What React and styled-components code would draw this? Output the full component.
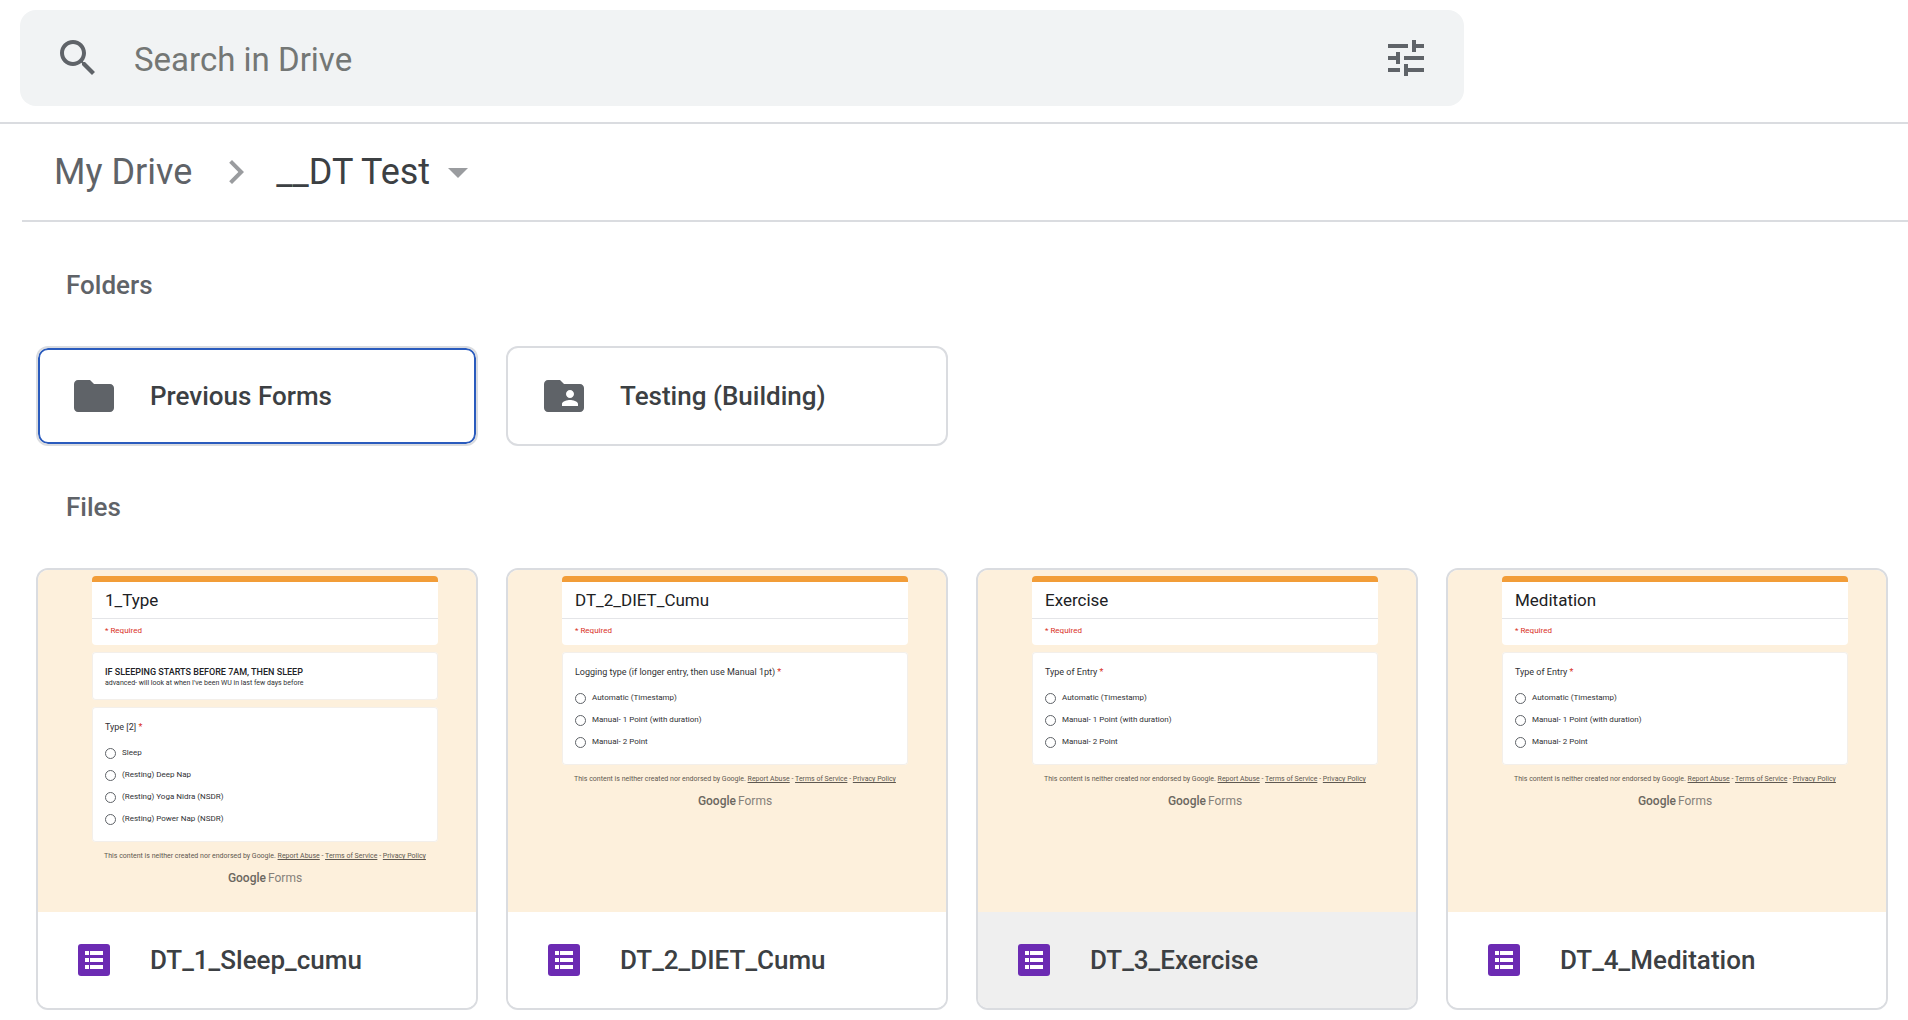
import React from "react";
import styled, { createGlobalStyle, css } from "styled-components";

const GlobalStyle = createGlobalStyle`
  *, *::before, *::after { box-sizing: border-box; }
  body {
    margin: 0;
    background: #fff;
    color: #3c4043;
    font-family: Roboto, "Liberation Sans", sans-serif;
  }
  button, input { font: inherit; color: inherit; }
`;

const Header = styled.header`
  display: flex;
  padding: 10px 20px 16px;
  border-bottom: 2px solid #dadce0;
`;

const SearchBar = styled.form`
  flex: 1;
  max-width: 1444px;
  height: 96px;
  display: flex;
  align-items: center;
  padding: 0 34px;
  border-radius: 16px;
  background: #f1f3f4;
  color: #5f6368;
`;

const SearchInput = styled.input`
  flex: 1;
  min-width: 0;
  height: 64px;
  padding: 2px 32px 0;
  border: 0;
  outline: 0;
  background: transparent;
  font-size: 33px;
  &::placeholder { color: #747775; opacity: 1; }
`;

const plainButton = css`
  padding: 0;
  border: 0;
  background: transparent;
  cursor: pointer;
`;

const IconButton = styled.button`
  ${plainButton}
  display: flex;
`;

const Icon = styled.svg`
  display: block;
  flex: none;
  width: 48px;
  height: 48px;
  fill: ${(p) => p.$color || "currentColor"};
`;

const Breadcrumbs = styled.nav`
  display: flex;
  align-items: center;
  height: 98px;
  margin-left: 22px;
  padding-left: 32px;
  border-bottom: 2px solid #dadce0;
  font-size: 36px;
  line-height: 48px;
`;

const Crumb = styled.a`
  margin-right: 20px;
  color: #5f6368;
  text-decoration: none;
`;

const CurrentCrumb = styled.button`
  ${plainButton}
  display: flex;
  align-items: center;
  gap: 4px;
  margin-left: 16px;
  color: #3c4043;
`;

const Main = styled.main`
  padding: 0 20px 10px 36px;
`;

const SectionTitle = styled.h2`
  margin: 0;
  padding: ${(p) => p.$top}px 30px 45px;
  color: #5f6368;
  font-size: 26px;
  font-weight: 500;
  line-height: 32px;
`;

const CardGrid = styled.div`
  display: grid;
  grid-template-columns: repeat(4, minmax(0, 1fr));
  gap: 28px;
`;

const cardFrame = css`
  border: 2px solid #dadce0;
  border-radius: 12px;
  background: #fff;
`;

const cardLabel = css`
  display: flex;
  align-items: center;
  gap: 32px;
  width: 100%;
  height: 96px;
  padding: 0 32px;
  color: #3c4043;
  font-size: 26px;
  font-weight: 500;
  text-align: left;
  text-decoration: none;
  white-space: nowrap;
  cursor: pointer;
`;

const FolderCard = styled.button`
  ${cardLabel}
  ${cardFrame}
  height: 100px;
  ${(p) => p.$selected && css`box-shadow: inset 0 0 0 2px #2a5bbd;`}
`;

const FileCard = styled.article`
  ${cardFrame}
  overflow: hidden;
`;

const FileLabel = styled.a`
  ${cardLabel}
  background: ${(p) => (p.$hovered ? "#efefef" : "#fff")};
`;

const Preview = styled.div`
  display: flex;
  flex-direction: column;
  gap: 7px;
  height: 342px;
  padding: 6px 38px 0 54px;
  background: #fdf0dc;
  color: #303134;
  white-space: nowrap;
`;

const FormHead = styled.div`
  height: 69px;
  border-top: 6px solid #f29d38;
  border-radius: 4px;
  background: #fff;
  font-size: 8px;
  line-height: 24px;
`;

const FormTitle = styled.h3`
  margin: 0;
  padding: 0 13px;
  border-bottom: 1px solid #e4e5e8;
  color: #202124;
  font-size: 17px;
  font-weight: 400;
  line-height: 36px;
`;

const Required = styled.p`
  margin: 0;
  padding: 0 13px;
  color: #d93025;
`;

const FormSection = styled.fieldset`
  min-width: 0;
  margin: 0;
  padding: 14px 13px 17px;
  border: 0;
  border-radius: 4px;
  background: #fff;
  box-shadow: inset 0 0 0 1px #f3efea;
  font-size: 8px;
  line-height: 12px;
`;

const Question = styled.div`
  margin-bottom: 14px;
  font-size: 9px;
`;

const Star = styled.span`
  color: #d93025;
`;

const Options = styled.div`
  display: flex;
  flex-direction: column;
  align-items: flex-start;
  gap: 10px;
`;

const Option = styled.label`
  display: flex;
  align-items: center;
  gap: 6px;
  height: 12px;
`;

const Radio = styled.input`
  appearance: none;
  width: 11px;
  height: 11px;
  margin: 0;
  border: 1px solid #5f6368;
  border-radius: 50%;
`;

const Notice = styled.div`
  height: 48px;
  padding: 14px 13px 0;
  border-radius: 4px;
  background: #fff;
  box-shadow: inset 0 0 0 1px #f3efea;
  font-size: 7px;
  line-height: 11px;
`;

const NoticeTitle = styled.div`
  color: #202124;
  font-size: 9px;
  font-weight: 500;
  line-height: 12px;
`;

const Disclaimer = styled.p`
  margin: 0;
  color: #5e5850;
  font-size: 7px;
  line-height: 14px;
  text-align: center;
`;

const DisclaimerLink = styled.a`
  color: inherit;
`;

const Brand = styled.div`
  color: #85807a;
  font-size: 12px;
  line-height: 16px;
  text-align: center;
`;

const BrandName = styled.span`
  margin-right: 2px;
  color: #6b675f;
  font-weight: 500;
`;

const folders = [
  { name: "Previous Forms", selected: true },
  { name: "Testing (Building)", shared: true },
];

const entryOptions = [
  "Automatic (Timestamp)",
  "Manual- 1 Point (with duration)",
  "Manual- 2 Point",
];

const files = [
  {
    name: "DT_1_Sleep_cumu",
    title: "1_Type",
    notice: {
      title: "IF SLEEPING STARTS BEFORE 7AM, THEN SLEEP",
      text: "advanced- will look at when I've been WU in last few days before",
    },
    question: "Type [2]",
    options: [
      "Sleep",
      "(Resting) Deep Nap",
      "(Resting) Yoga Nidra (NSDR)",
      "(Resting) Power Nap (NSDR)",
    ],
  },
  {
    name: "DT_2_DIET_Cumu",
    title: "DT_2_DIET_Cumu",
    question: "Logging type (if longer entry, then use Manual 1pt)",
    options: entryOptions,
  },
  {
    name: "DT_3_Exercise",
    title: "Exercise",
    question: "Type of Entry",
    options: entryOptions,
    hovered: true,
  },
  {
    name: "DT_4_Meditation",
    title: "Meditation",
    question: "Type of Entry",
    options: entryOptions,
  },
];

const FOLDER =
  "M10 4H4c-1.1 0-1.99.9-1.99 2L2 18c0 1.1.9 2 2 2h16c1.1 0 2-.9 2-2V8c0-1.1-.9-2-2-2h-8l-2-2z";
const FOLDER_SHARED =
  "M20 6h-8l-2-2H4c-1.1 0-1.99.9-1.99 2L2 18c0 1.1.9 2 2 2h16c1.1 0 2-.9 2-2V8c0-1.1-.9-2-2-2zm-5 3c1.1 0 2 .9 2 2s-.9 2-2 2-2-.9-2-2 .9-2 2-2zm4 8h-8v-1c0-1.33 2.67-2 4-2s4 .67 4 2v1z";

function Glyph({ d, color }) {
  return (
    <Icon viewBox="0 0 24 24" $color={color} aria-hidden="true">
      <path d={d} />
    </Icon>
  );
}

function FormsIcon() {
  return (
    <Icon viewBox="0 0 48 48" $color="#fff" aria-hidden="true">
      <rect x="8" y="8" width="32" height="32" rx="3" fill="#6c2bb3" />
      {[15, 22, 29].map((y) => (
        <path key={y} d={`M15 ${y}h4v4h-4zM20 ${y}h13v4H20z`} />
      ))}
    </Icon>
  );
}

function FormPreview({ file }) {
  return (
    <Preview>
      <FormHead>
        <FormTitle>{file.title}</FormTitle>
        <Required>* Required</Required>
      </FormHead>
      {file.notice && (
        <Notice>
          <NoticeTitle>{file.notice.title}</NoticeTitle>
          {file.notice.text}
        </Notice>
      )}
      <FormSection aria-label={file.question}>
        <Question>
          {file.question} <Star>*</Star>
        </Question>
        <Options>
          {file.options.map((option) => (
            <Option key={option}>
              <Radio type="radio" name={file.name} />
              {option}
            </Option>
          ))}
        </Options>
      </FormSection>
      <Disclaimer>
        This content is neither created nor endorsed by Google.{" "}
        <DisclaimerLink href="#report">Report Abuse</DisclaimerLink> -{" "}
        <DisclaimerLink href="#terms">Terms of Service</DisclaimerLink> -{" "}
        <DisclaimerLink href="#privacy">Privacy Policy</DisclaimerLink>
      </Disclaimer>
      <Brand>
        <BrandName>Google</BrandName>Forms
      </Brand>
    </Preview>
  );
}

export default function App() {
  return (
    <>
      <GlobalStyle />
      <Header>
        <SearchBar role="search" onSubmit={(e) => e.preventDefault()}>
          <IconButton type="submit" aria-label="Search">
            <Glyph d="M15.5 14h-.79l-.28-.27C15.41 12.59 16 11.11 16 9.5 16 5.91 13.09 3 9.5 3S3 5.91 3 9.5 5.91 16 9.5 16c1.61 0 3.09-.59 4.23-1.57l.27.28v.79l5 4.99L20.49 19l-4.99-5zm-6 0C7.01 14 5 11.99 5 9.5S7.01 5 9.5 5 14 7.01 14 9.5 11.99 14 9.5 14z" />
          </IconButton>
          <SearchInput aria-label="Search in Drive" placeholder="Search in Drive" />
          <IconButton type="button" aria-label="Search options">
            <Glyph d="M3 17v2h6v-2H3zM3 5v2h10V5H3zm10 16v-2h8v-2h-8v-2h-2v6h2zM7 9v2H3v2h4v2h2V9H7zm14 4v-2H11v2h10zm-6-4h2V7h4V5h-4V3h-2v6z" />
          </IconButton>
        </SearchBar>
      </Header>
      <Breadcrumbs aria-label="Location">
        <Crumb href="#my-drive">My Drive</Crumb>
        <Glyph color="#9a9c9f" d="M10 6L8.59 7.41 13.17 12l-4.58 4.59L10 18l6-6z" />
        <CurrentCrumb type="button">
          __DT Test
          <Glyph color="#9a9c9f" d="M7 10l5 5 5-5z" />
        </CurrentCrumb>
      </Breadcrumbs>
      <Main>
        <SectionTitle $top={47}>Folders</SectionTitle>
        <CardGrid>
          {folders.map((folder) => (
            <FolderCard key={folder.name} type="button" $selected={folder.selected}>
              <Glyph color="#5f6368" d={folder.shared ? FOLDER_SHARED : FOLDER} />
              {folder.name}
            </FolderCard>
          ))}
        </CardGrid>
        <SectionTitle $top={45}>Files</SectionTitle>
        <CardGrid>
          {files.map((file) => (
            <FileCard key={file.name}>
              <FormPreview file={file} />
              <FileLabel href={`#${file.name}`} $hovered={file.hovered}>
                <FormsIcon />
                {file.name}
              </FileLabel>
            </FileCard>
          ))}
        </CardGrid>
      </Main>
    </>
  );
}
